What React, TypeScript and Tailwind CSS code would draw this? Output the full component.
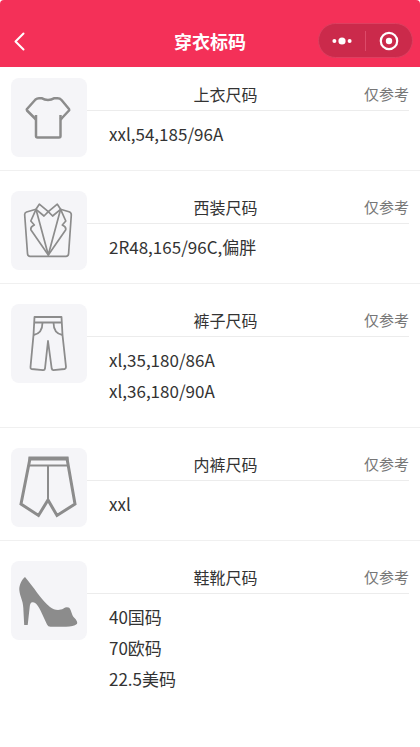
import type { ReactNode } from "react";

interface SizeGroup {
  readonly title: string;
  readonly icon: ReactNode;
  readonly sizes: readonly string[];
}

function ShirtIcon() {
  return (
    <svg viewBox="0 0 76 79" className="h-full w-full" fill="none" stroke="#8c8c8c" strokeWidth="2.5" strokeLinejoin="round" aria-hidden="true">
      <path d="M25 41.5 L23.5 40 L16 32.5 Q15.5 31.5 16 31 L24.5 21.5 Q26 20.2 28 20.2 L30.5 20.2 Q37 24 43.5 20.2 L46.5 20.2 Q49 20.2 50.5 22 L58 31 Q58.5 32 58 32.5 L51 40 L49.5 41.5" />
      <path d="M25 37 V58 Q25 59.5 26.5 59.5 H48 Q49.5 59.5 49.5 58 V37" />
    </svg>
  );
}

function SuitIcon() {
  return (
    <svg viewBox="0 0 76 79" className="h-full w-full" fill="none" stroke="#8c8c8c" strokeWidth="1.7" strokeLinejoin="round" aria-hidden="true">
      <path d="M25 18.3 L15.5 21 Q13.5 21.6 13.7 24 L16.5 62.5 Q16.7 65.3 19 65.3 H55 Q57.4 65.3 57.6 62.5 L60.3 24 Q60.4 21.6 58 20.8 L49.5 18.3" />
      <path d="M28.3 13.2 L37.3 20.7 L33 25 L25 18.3 Z" />
      <path d="M46.3 13.2 L37.3 20.7 L41.6 25 L49.6 18.3 Z" />
      <path d="M25 18.3 L37.3 64 L49.6 18.3" />
      <path d="M25 18.3 L19.8 30 L23.3 34 Q19 36 20 39 L37.3 64 L54.6 39 Q55.6 36 51.3 34 L54.8 30 L49.6 18.3" />
    </svg>
  );
}

function TrousersIcon() {
  return (
    <svg viewBox="0 0 76 79" className="h-full w-full" fill="none" stroke="#8c8c8c" strokeWidth="1.8" strokeLinejoin="round" aria-hidden="true">
      <path d="M23.5 13 H50.5 L51.5 31 L55 63 Q55 64.7 53.5 65 L42.5 66.2 Q41 66.2 40.7 64.5 L37 37 L34 64.5 Q33.7 66.4 32 66.2 L20.5 65 Q19.3 64.6 19.5 63 L22.5 31 Z" />
      <path d="M23 18.5 H51" />
      <path d="M31.5 18.5 Q31.5 29.5 22.5 31" />
      <path d="M42.5 18.5 Q42.5 29.5 51.5 31" />
    </svg>
  );
}

function BriefsIcon() {
  return (
    <svg viewBox="0 0 76 79" className="h-full w-full" fill="none" stroke="#8c8c8c" aria-hidden="true">
      <path strokeWidth="3" d="M19 10.5 H56 L64 56 L46 67.5 L37 52 L27.5 67.5 L10 56 Z" />
      <path strokeWidth="4" d="M17.5 10.5 H57.5" />
      <path strokeWidth="2" d="M18 17.5 H57 M37 17.5 V53" />
    </svg>
  );
}

function HeelIcon() {
  return (
    <svg viewBox="0 0 76 79" className="h-full w-full" fill="#8c8c8c" aria-hidden="true">
      <path d="M14 16 C11 18 8 24 8.3 29 C9 36 12 39 12.3 47 L13.2 64 H16.7 L18.7 46 Q19 41.5 21.5 41.3 C25 41 27 45 29.5 49.5 L36 63.5 Q37 65.7 39.5 65.7 H55 Q62.5 65.7 65.8 63 C67 61.5 65.5 59 63.5 57 C60 54 60.5 47.5 57.5 46.5 Q55 45.6 52.5 47.5 C48 50 43 49 39 46 C31 40 22 25 14 16 Z" />
    </svg>
  );
}

const groups: readonly SizeGroup[] = [
  { title: "上衣尺码", icon: <ShirtIcon />, sizes: ["xxl,54,185/96A"] },
  { title: "西装尺码", icon: <SuitIcon />, sizes: ["2R48,165/96C,偏胖"] },
  { title: "裤子尺码", icon: <TrousersIcon />, sizes: ["xl,35,180/86A", "xl,36,180/90A"] },
  { title: "内裤尺码", icon: <BriefsIcon />, sizes: ["xxl"] },
  { title: "鞋靴尺码", icon: <HeelIcon />, sizes: ["40国码", "70欧码", "22.5美码"] },
];

function Header() {
  return (
    <header className="grid grid-cols-[1fr_auto_1fr] items-center rounded-t-sm bg-[#f43058] px-[7px] pt-[23px] pb-[9px] text-white">
      <button type="button" aria-label="返回" className="flex h-8 w-6 items-center justify-center">
        <svg viewBox="0 0 12 20" className="h-5 w-3" fill="none" stroke="currentColor" strokeWidth="2" strokeLinecap="round" strokeLinejoin="round" aria-hidden="true">
          <path d="M10.5 2.5 L2.5 10.5 L10.5 18.5" />
        </svg>
      </button>
      <h1 className="text-lg leading-7 font-bold">穿衣标码</h1>
      <div className="flex h-[35px] w-[95px] items-center justify-self-end rounded-full border border-[#dd3f60] bg-[#cb2a4b]">
        <button type="button" aria-label="更多" className="flex h-full flex-1 items-center justify-center">
          <svg viewBox="0 0 20 8" className="h-2 w-5" fill="currentColor" aria-hidden="true">
            <circle cx="2.4" cy="4" r="2" />
            <circle cx="10" cy="4" r="3.6" />
            <circle cx="17.6" cy="4" r="2" />
          </svg>
        </button>
        <span className="h-5 w-px bg-[#dd4a69]" />
        <button type="button" aria-label="关闭" className="flex h-full flex-1 items-center justify-center">
          <svg viewBox="0 0 20 20" className="h-5 w-5" aria-hidden="true">
            <circle cx="10" cy="10" r="8.2" fill="none" stroke="currentColor" strokeWidth="2.2" />
            <circle cx="10" cy="10" r="3.2" fill="currentColor" />
          </svg>
        </button>
      </div>
    </header>
  );
}

function SizeSection({ group }: { readonly group: SizeGroup }) {
  return (
    <section className="flex items-start border-b border-[#f0f0f0] px-[11px] pt-5 pb-[13px] first:pt-[11px] last:border-b-0">
      <div className="h-[79px] w-[76px] shrink-0 overflow-hidden rounded-lg bg-[#f5f5f8]">
        {group.icon}
      </div>
      <div className="min-w-0 flex-1">
        <div className="flex items-center border-b border-[#ececec]">
          <h2 className="flex-1 text-center text-base leading-8">{group.title}</h2>
          <span className="text-[15px] leading-8 text-[#777777]">仅参考</span>
        </div>
        <ul className="pt-[7px] pb-2 pl-[22px]">
          {group.sizes.map((size) => (
            <li key={size} className="text-[17px] leading-[31px]">
              {size}
            </li>
          ))}
        </ul>
      </div>
    </section>
  );
}

export default function App() {
  return (
    <div className="min-h-screen bg-white font-['Noto_Sans_CJK_SC',sans-serif] text-[#333333]">
      <Header />
      <main>
        {groups.map((group) => (
          <SizeSection key={group.title} group={group} />
        ))}
      </main>
    </div>
  );
}
